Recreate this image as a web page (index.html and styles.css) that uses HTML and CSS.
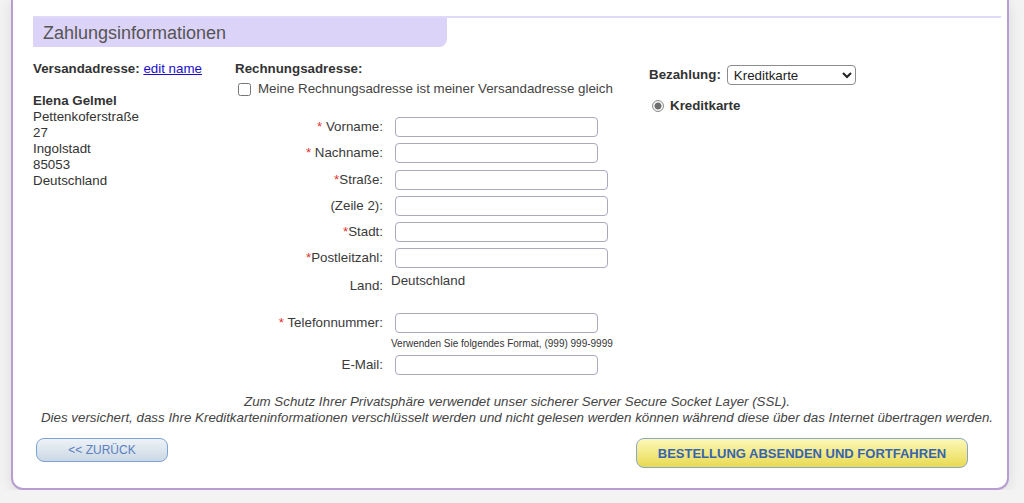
FILE: index.html
```html
<!DOCTYPE html>
<html lang="de">
<head>
  <meta charset="UTF-8" />
  <meta name="viewport" content="width=device-width, initial-scale=1" />
  <title>Zahlungsinformationen</title>
  <link rel="stylesheet" href="styles.css">
</head>
<body>
  <div class="seite">
    <div class="karte">
      <div class="trennlinie"></div>
      <h2 class="reiter">Zahlungsinformationen</h2>

      <div class="spalten">
        <!-- Versandadresse -->
        <div class="spalte versand">
          <div><b>Versandadresse:</b> <a href="#">edit name</a></div>
          <div class="adresse">
            <b>Elena Gelmel</b><br>
            Pettenkoferstraße<br>
            27<br>
            Ingolstadt<br>
            85053<br>
            Deutschland
          </div>
        </div>

        <!-- Rechnungsadresse -->
        <div class="spalte rechnung">
          <div><b>Rechnungsadresse:</b></div>
          <label class="gleich"><input type="checkbox"><span>Meine Rechnungsadresse ist meiner Versandadresse gleich</span></label>

          <div class="formular">
            <div class="zeile"><span class="label"><i>*</i> Vorname:</span><input class="feld kurz" type="text"></div>
            <div class="zeile"><span class="label"><i>*</i> Nachname:</span><input class="feld kurz" type="text"></div>
            <div class="zeile"><span class="label"><i>*</i>Straße:</span><input class="feld lang" type="text"></div>
            <div class="zeile"><span class="label">(Zeile 2):</span><input class="feld lang" type="text"></div>
            <div class="zeile"><span class="label"><i>*</i>Stadt:</span><input class="feld lang" type="text"></div>
            <div class="zeile"><span class="label"><i>*</i>Postleitzahl:</span><input class="feld lang" type="text"></div>
            <div class="zeile land"><span class="label">Land:</span><span class="wert">Deutschland</span></div>
            <div class="zeile tel"><span class="label"><i>*</i> Telefonnummer:</span><input class="feld kurz" type="text"></div>
            <div class="zeile hinweis"><span class="label"></span><span class="wert">Verwenden Sie folgendes Format, (999) 999-9999</span></div>
            <div class="zeile"><span class="label">E-Mail:</span><input class="feld kurz" type="text"></div>
          </div>
        </div>

        <!-- Bezahlung -->
        <div class="spalte bezahlung">
          <div class="auswahl">
            <b>Bezahlung:</b>
            <select class="art">
              <option>Kreditkarte</option>
            </select>
          </div>
          <label class="methode"><input type="radio" checked> <b>Kreditkarte</b></label>
        </div>
      </div>

      <p class="ssl">
        Zum Schutz Ihrer Privatsphäre verwendet unser sicherer Server Secure Socket Layer (SSL).<br>
        Dies versichert, dass Ihre Kreditkarteninformationen verschlüsselt werden und nicht gelesen werden können während diese über das Internet übertragen werden.
      </p>

      <div class="aktionen">
        <button class="btn zurueck" type="button">&lt;&lt; ZURÜCK</button>
        <button class="btn weiter" type="button">BESTELLUNG ABSENDEN UND FORTFAHREN</button>
      </div>
    </div>
  </div>
</body>
</html>
```

FILE: styles.css
```css
/* Basis */
*, *::before, *::after { box-sizing: border-box; }

html, body {
  margin: 0; padding: 0;
  background: #f3f3f3;
  font-family: Arial, "Liberation Sans", Helvetica, sans-serif;
  font-size: 13.33px; line-height: 16px;
  color: #333;
}

.seite { padding: 0 0 0 11px; }

/* Karte */
.karte {
  width: 998px;
  background: #fff;
  border: 2px solid #b89dd2;
  border-top: none;
  border-radius: 0 0 12px 12px;
  box-shadow: 0 2px 14px rgba(0,0,0,0.10);
  padding: 16px 6px 20px 20px;
}

.trennlinie { height: 2px; background: #e0d9f8; }

.reiter {
  margin: 0;
  width: 414px; height: 29px;
  background: #dcd3f8;
  border-radius: 0 0 8px 0;
  padding: 0 10px;
  font-size: 18px; font-weight: normal; line-height: 30px;
  color: #555;
}

/* Spalten */
.spalten { display: flex; margin-top: 14px; }
.spalte.versand { width: 202px; }
.spalte.rechnung { width: 414px; }
.spalte.bezahlung { padding-top: 4px; }

a { color: #1a0dcc; }
.adresse { margin-top: 16px; }

.gleich { display: flex; align-items: center; margin-top: 4px; color: #444; }
.gleich input { margin: 0 0 0 3px; width: 13px; height: 13px; }
.gleich span { margin-left: 7px; }

/* Formular */
.formular { margin-top: 20px; }
.zeile { display: flex; align-items: center; min-height: 20px; margin-bottom: 6.3px; }
.zeile .label { width: 148px; text-align: right; margin-right: 8px; color: #3a3a3a; white-space: nowrap; }
.zeile .label i { font-style: normal; color: #e03030; }
.zeile .wert { color: #3a3a3a; }

.feld {
  height: 20px; margin: 0 0 0 4px;
  border: 1px solid #aca9bd; border-radius: 4px;
  background: #fff; font: inherit;
}
.feld.kurz { width: 203px; }
.feld.lang { width: 213px; }

.zeile.land { align-items: flex-start; height: 32px; }
.zeile.land .label { margin-top: 3px; }
.zeile.land .wert { margin-top: -2px; }

.zeile.tel { margin-bottom: 4px; }
.zeile.hinweis { min-height: 14px; margin-bottom: 4px; }
.zeile.hinweis .wert { font-size: 10px; line-height: 14px; color: #333; white-space: nowrap; }

/* Bezahlung */
.auswahl { display: flex; align-items: center; gap: 6px; }
.art {
  width: 129px; height: 20px;
  border: 1px solid #8c8c8c; border-radius: 4px;
  font: inherit; color: #222; background: #fff;
  padding: 0 2px;
}
.methode { display: flex; align-items: center; margin-top: 13px; }
.methode input {
  appearance: none; -webkit-appearance: none;
  margin: 0 6px 0 3px; width: 12px; height: 12px;
  border: 1px solid #8d8d8d; border-radius: 50%;
  background: radial-gradient(circle, #6e6e6e 0 3.2px, #f4f4f4 3.8px);
}

/* SSL-Hinweis */
.ssl {
  margin: 13px 0 0;
  text-align: center; font-style: italic; color: #444;
}

/* Buttons */
.aktionen { display: flex; justify-content: space-between; align-items: flex-start; margin-top: 12px; padding: 0 33px 0 3px; }
.btn { font-family: inherit; cursor: pointer; border-radius: 8px; }
.zurueck {
  width: 132px; height: 24px;
  border: 1px solid #7ea4d2;
  background: linear-gradient(#edf2f7, #cbd8e4);
  color: #5b80c2; font-size: 12px;
}
.weiter {
  width: 332px; height: 30px;
  border: 1px solid #8aa7c9;
  background: linear-gradient(#fdf8b8, #e8da52);
  color: #3764ad; font-size: 13px; font-weight: bold;
}
```
